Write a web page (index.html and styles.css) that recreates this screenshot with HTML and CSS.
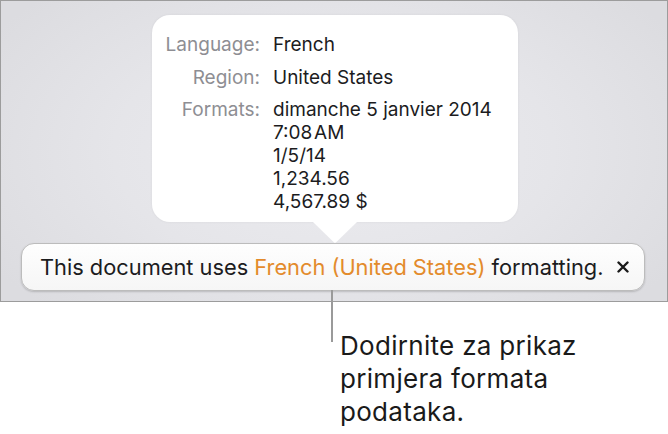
FILE: index.html
```html
<!DOCTYPE html>
<html lang="en">
<head>
<meta charset="utf-8">
<title>Formatting</title>
<link rel="stylesheet" href="styles.css">
</head>
<body>
<div class="panel">
  <div class="popover">
    <span class="label">Language:</span><span class="value">French</span>
    <span class="label">Region:</span><span class="value">United States</span>
    <span class="label">Formats:</span>
    <span class="value formats">dimanche 5 janvier 2014<br>7:08&#8202;AM<br>1/5/14<br>1,234.56<br>4,567.89 $</span>
    <svg class="arrow" width="44" height="21" viewBox="0 0 44 21"><path d="M0 0 H44 L23.2 20.2 Q22 21.2 20.8 20.2 Z" fill="#fff"/></svg>
  </div>
  <div class="bar">
    <p class="msg">This document uses <span class="accent">French (United States)</span> formatting.</p>
    <svg class="close" width="12" height="12" viewBox="0 0 12 12"><path d="M1.5 1.5 L10.5 10.5 M10.5 1.5 L1.5 10.5" stroke="#1a1a1a" stroke-width="2.4" stroke-linecap="round"/></svg>
    <span class="leader"></span>
  </div>
</div>
<p class="callout">Dodirnite za prikaz<br>primjera formata<br>podataka.</p>
</body>
</html>
```
FILE: styles.css
```css
html, body {
  margin: 0;
  padding: 0;
  background: #ffffff;
}
body {
  width: 668px;
  height: 434px;
  overflow: hidden;
  font-family: Inter, "Noto Sans", sans-serif;
  color: #1c1c1e;
}
.panel {
  box-sizing: border-box;
  width: 668px;
  height: 302px;
  border: 1px solid #9c9c9c;
  padding: 14px 0 0 0;
  background: radial-gradient(ellipse 60% 75% at 50% 50%, #ececf0 0%, #e5e5e9 55%, #dcdce0 100%);
  display: flex;
  flex-direction: column;
}
.popover {
  position: relative;
  box-sizing: border-box;
  width: 366px;
  height: 207px;
  margin-left: 151px;
  padding: 18px 0 0 0;
  background: #ffffff;
  border-radius: 18px;
  box-shadow: 0 0 3px rgba(0,0,0,0.06);
  display: grid;
  grid-template-columns: 108px 1fr;
  column-gap: 13px;
  row-gap: 9.5px;
  align-content: start;
  font-size: 19px;
  line-height: 23px;
}
.label {
  text-align: right;
  color: #8e8e93;
}
.value {
  color: #1c1c1e;
}
.arrow {
  position: absolute;
  top: 100%;
  left: 161px;
  display: block;
}
.bar {
  position: relative;
  box-sizing: border-box;
  width: 624px;
  height: 48px;
  margin: 21px 0 0 20px;
  padding: 0 15px 0 18px;
  border: 1px solid #bcbcbc;
  border-radius: 13px;
  background: linear-gradient(#fefefe, #f6f6f6);
  box-shadow: 0 1px 2px rgba(0,0,0,0.18);
  display: flex;
  align-items: center;
  justify-content: space-between;
}
.msg {
  margin: 0;
  font-size: 21.8px;
  color: #1c1c1e;
  white-space: nowrap;
}
.accent {
  color: #e38b2c;
}
.close {
  display: block;
}
.leader {
  position: absolute;
  top: 100%;
  left: 309px;
  width: 2px;
  height: 52px;
  background: #9a9a9a;
}
.callout {
  margin: 27px 0 0 340px;
  font-size: 26px;
  letter-spacing: 0.3px;
  line-height: 33px;
  color: #1a1a1a;
}
```
